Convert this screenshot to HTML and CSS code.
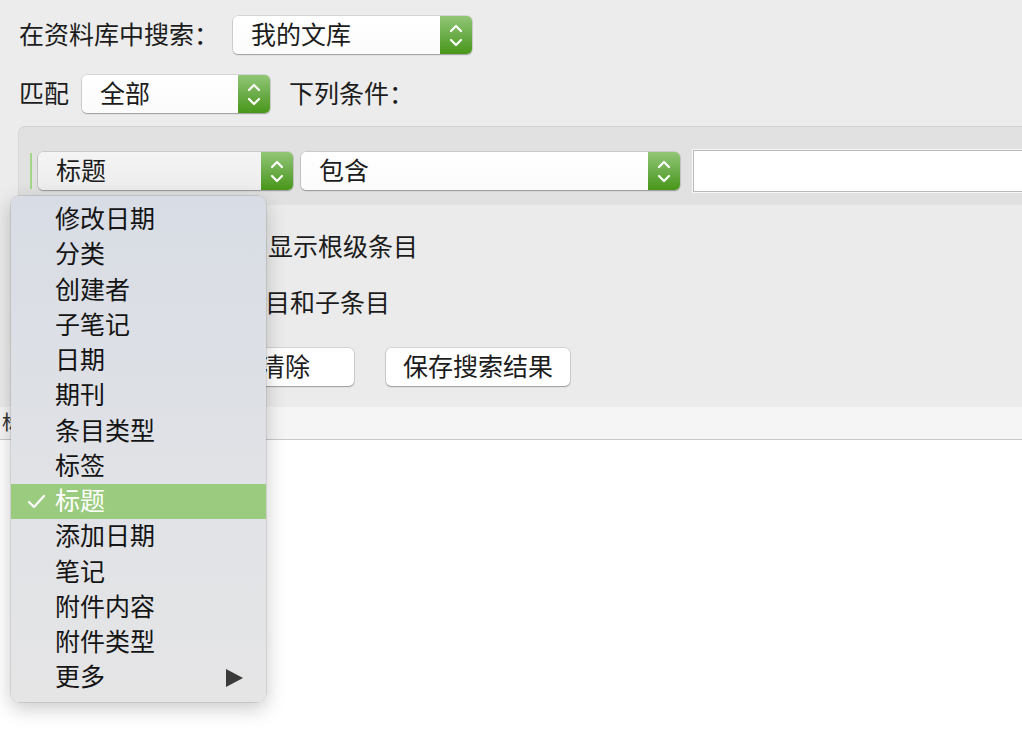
FILE: index.html
```html
<!DOCTYPE html>
<html lang="zh-CN">
<head>
<meta charset="utf-8">
<title>高级搜索</title>
<link rel="stylesheet" href="styles.css">
</head>
<body>
<div class="top">
  <div class="row row-lib">
    <span class="label lib-label">在资料库中搜索：</span>
    <div class="select w-lib">
      <span class="sel-text">我的文库</span>
      <span class="stepper"><svg width="32" height="38" viewBox="0 0 32 38"><path d="M11 15 L16 10 L21 15" /><path d="M11 24 L16 29 L21 24" /></svg></span>
    </div>
  </div>
  <div class="row row-match">
    <span class="label match-label">匹配</span>
    <div class="select w-match">
      <span class="sel-text">全部</span>
      <span class="stepper"><svg width="32" height="38" viewBox="0 0 32 38"><path d="M11 15 L16 10 L21 15" /><path d="M11 24 L16 29 L21 24" /></svg></span>
    </div>
    <span class="label cond-label">下列条件：</span>
  </div>
</div>

<div class="panel">
  <div class="cond-row">
    <span class="drop-line"></span>
    <div class="select w-field active">
      <span class="sel-text">标题</span>
      <span class="stepper"><svg width="32" height="38" viewBox="0 0 32 38"><path d="M11 15 L16 10 L21 15" /><path d="M11 24 L16 29 L21 24" /></svg></span>
    </div>
    <div class="select w-op">
      <span class="sel-text">包含</span>
      <span class="stepper"><svg width="32" height="38" viewBox="0 0 32 38"><path d="M11 15 L16 10 L21 15" /><path d="M11 24 L16 29 L21 24" /></svg></span>
    </div>
    <div class="text-input"></div>
  </div>
</div>

<div class="options">
  <label class="opt opt-root"><span class="check"></span><span class="opt-text">仅在搜索结果列表中显示根级条目</span></label>
  <label class="opt opt-child"><span class="check"></span><span class="opt-text">包括匹配条目的父条目和子条目</span></label>
  <div class="buttons">
    <button class="btn btn-search">搜索</button>
    <button class="btn btn-clear">清除</button>
    <button class="btn btn-save">保存搜索结果</button>
  </div>
</div>

<div class="table-head"><span class="col-title">标题</span></div>
<div class="results"></div>

<div class="menu">
  <div class="item">修改日期</div>
  <div class="item">分类</div>
  <div class="item">创建者</div>
  <div class="item">子笔记</div>
  <div class="item">日期</div>
  <div class="item">期刊</div>
  <div class="item">条目类型</div>
  <div class="item">标签</div>
  <div class="item selected"><svg class="tick" width="19" height="15" viewBox="0 0 19 15"><path d="M2 8 L7 13 L17 2" /></svg>标题</div>
  <div class="item">添加日期</div>
  <div class="item">笔记</div>
  <div class="item">附件内容</div>
  <div class="item">附件类型</div>
  <div class="item more">更多<svg class="arrow" width="18" height="18" viewBox="0 0 18 18"><path d="M1 0 L18 9 L1 18 Z" /></svg></div>
</div>
</body>
</html>
```

FILE: styles.css
```css
* { box-sizing: border-box; }

html, body {
  margin: 0;
  padding: 0;
}

body {
  width: 1022px;
  height: 732px;
  overflow: hidden;
  background: #ffffff;
  font-family: "Noto Sans CJK SC", "Noto Sans", sans-serif;
  font-size: 25px;
  color: #1c1c1c;
  position: relative;
}

.top {
  background: #ececec;
  padding: 16px 0 13px 19px;
}

.row {
  display: flex;
  align-items: center;
  height: 38px;
}

.row-match {
  margin-top: 21px;
}

.label {
  line-height: 1;
  padding-bottom: 3px;
  white-space: nowrap;
}

.lib-label { margin-right: 14px; }
.match-label { margin-right: 13px; }
.cond-label { margin-left: 19px; }

.select {
  position: relative;
  display: flex;
  align-items: center;
  height: 38px;
  border-radius: 5px;
  background: linear-gradient(#ffffff, #fbfbfb);
  box-shadow: 0 0 0 0.5px rgba(0, 0, 0, 0.18), 0 1px 1.5px rgba(0, 0, 0, 0.28);
  flex: none;
}

.select.active {
  background: linear-gradient(#f4f4f4, #ededed);
}

.sel-text {
  flex: 1;
  padding-left: 18px;
  padding-bottom: 3px;
  line-height: 1;
  white-space: nowrap;
}

.stepper {
  width: 32px;
  height: 38px;
  border-radius: 0 5px 5px 0;
  background: linear-gradient(#92c676, #6cad4a 50%, #489719);
  display: flex;
}

.stepper path {
  fill: none;
  stroke: #ffffff;
  stroke-width: 2.2;
  stroke-linecap: round;
  stroke-linejoin: round;
}

.w-lib { width: 239px; }
.w-match { width: 188px; }
.w-field { width: 255px; }
.w-op { width: 379px; margin-left: 8px; }

.panel {
  background: #ececec;
  padding: 0 0 0 18px;
}

.cond-row {
  display: flex;
  align-items: center;
  background: #e1e1e1;
  border-top: 1px solid #d3d3d3;
  border-left: 1px solid #d9d9d9;
  border-top-left-radius: 7px;
  padding: 23px 0 13px 11px;
  height: 79px;
}

.drop-line {
  width: 2px;
  height: 36px;
  background: #a4d588;
  margin-right: 6px;
  flex: none;
}

.text-input {
  flex: none;
  width: 340px;
  height: 42px;
  margin-left: 13px;
  background: #ffffff;
  border: 1px solid #b9b9b9;
  box-shadow: 0 0 0 1px #f7f7f7;
}

.options {
  background: #ebebeb;
  height: 202px;
  padding: 25px 0 0 14px;
  display: flex;
  flex-direction: column;
}

.opt {
  display: flex;
  align-items: center;
  height: 34px;
  white-space: nowrap;
}

.opt-text {
  line-height: 1;
  padding-bottom: 3px;
}

.opt-child { margin-top: 22px; }

.check {
  width: 18px;
  height: 18px;
  border-radius: 4px;
  background: #ffffff;
  box-shadow: 0 0 0 0.5px rgba(0, 0, 0, 0.3), 0 1px 1px rgba(0, 0, 0, 0.2);
  margin-right: 8px;
  flex: none;
}

.opt-root .check { margin-right: 11px; }

.buttons {
  display: flex;
  margin-top: 28px;
}

.btn {
  height: 38px;
  padding: 0 0 3px 0;
  border: none;
  border-radius: 5px;
  background: #ffffff;
  box-shadow: 0 0 0 0.5px rgba(0, 0, 0, 0.2), 0 1px 1.5px rgba(0, 0, 0, 0.28);
  font-family: inherit;
  font-size: 25px;
  color: #1c1c1c;
  line-height: 1;
}

.btn-search { width: 138px; margin-left: 32px; }
.btn-clear { width: 138px; margin-left: 32px; }
.btn-save { width: 184px; margin-left: 32px; }

.table-head {
  height: 33px;
  background: #f5f5f5;
  border-bottom: 1px solid #c9c9c9;
  padding-left: 2px;
  font-size: 20px;
  line-height: 30px;
  color: #333;
}

.results {
  background: #ffffff;
}

.menu {
  position: absolute;
  left: 11px;
  top: 196px;
  width: 255px;
  height: 506px;
  padding: 6px 0 6.5px 0;
  border-radius: 8px;
  background: linear-gradient(#d8dce4, #e0e2e6 55%, #e5e5e6);
  box-shadow: 0 0 0 0.5px rgba(0, 0, 0, 0.18), 0 6px 20px rgba(0, 0, 0, 0.22);
}

.item {
  position: relative;
  height: 35.25px;
  line-height: 31px;
  padding-left: 44px;
  color: #141414;
  white-space: nowrap;
}

.item.selected {
  background: #9bcb7e;
  color: #ffffff;
}

.tick {
  position: absolute;
  left: 16px;
  top: 10px;
}

.tick path {
  fill: none;
  stroke: #ffffff;
  stroke-width: 2.2;
  stroke-linecap: round;
  stroke-linejoin: round;
}

.arrow {
  position: absolute;
  left: 214px;
  top: 9px;
}

.arrow path {
  fill: #3a3a3a;
}
```
